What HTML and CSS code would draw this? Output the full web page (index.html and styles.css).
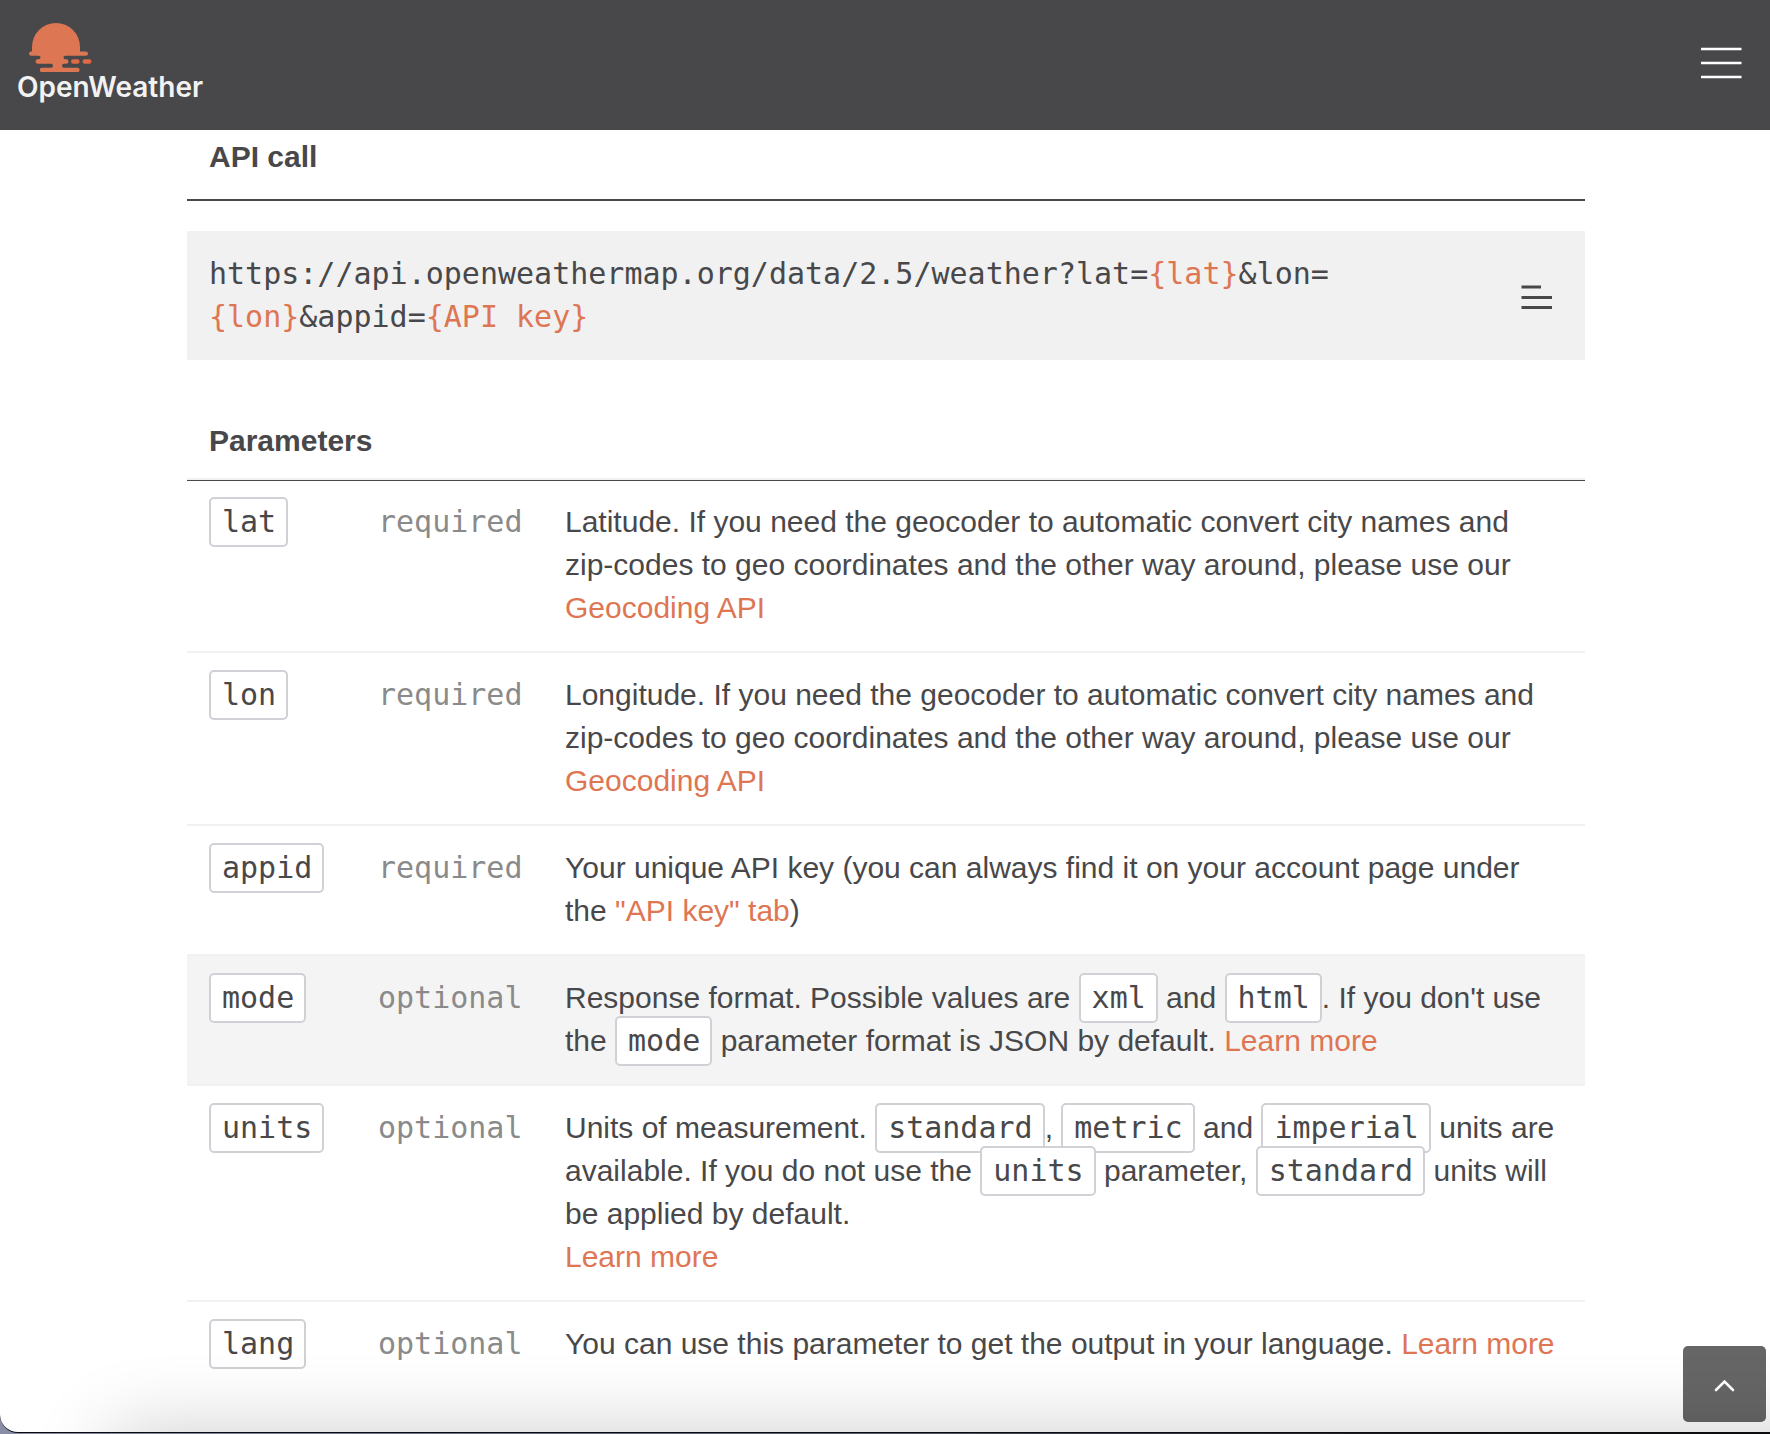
FILE: index.html
```html
<!DOCTYPE html>
<html lang="en">
<head>
<meta charset="utf-8">
<meta name="viewport" content="width=device-width, initial-scale=1">
<title>Current weather data - OpenWeather</title>
<link rel="stylesheet" href="styles.css">
</head>
<body>
<div class="page">
  <header class="topbar">
    <a class="logo" href="#">
      <svg class="logo-mark" width="64" height="51" viewBox="28 22 64 51" aria-hidden="true">
        <path class="sun" d="M32 51.400V47a24 24 0 0 1 48 0V51.400H85.800a2.200 2.200 0 0 1 0 4.400H65.200a1.700 1.700 0 0 0 0 3.400H66.300a2.200 2.200 0 0 1 0 4.500H64a2 2 0 0 0 0 4H77.400a2.200 2.200 0 0 1 0 4.400H42a2.200 2.200 0 0 1 0-4.400H51a2 2 0 0 0 0-4H37.800a2.200 2.200 0 0 1 0-4.500H38.800a1.700 1.700 0 0 0 0-3.400H31.200a2.200 2.200 0 0 1 0-4.400Z"/>
        <rect class="ray" x="71" y="59.200" width="8.600" height="4.500" rx="2.200"/>
        <rect class="ray" x="82.600" y="59.200" width="8.800" height="4.500" rx="2.200"/>
      </svg>
      <span class="logo-name">OpenWeather</span>
    </a>
    <button class="menu-button" type="button" aria-label="Menu">
      <svg width="42" height="32" viewBox="0 0 42 32" aria-hidden="true"><path d="M1 2h40.500M1 16h40.500M1 30h40.500"/></svg>
    </button>
  </header>

  <main class="content">
    <section>
      <h2 class="heading heading-call">API call</h2>
      <div class="call">
        <code class="call-url">https://api.openweathermap.org/data/2.5/weather?lat=<span class="accent">{lat}</span>&amp;lon=<wbr><span class="accent">{lon}</span>&amp;appid=<span class="accent">{API key}</span></code>
        <button class="call-menu" type="button" aria-label="More actions">
          <svg width="32" height="30" viewBox="0 0 32 30" aria-hidden="true"><path d="M0.500 7h19.500M0.500 17.500h30.500M0.500 27.500h30.500"/></svg>
        </button>
      </div>
    </section>

    <section>
      <h2 class="heading heading-params" id="params">Parameters</h2>
      <table class="params" aria-labelledby="params">
        <tbody>
          <tr>
            <td class="name"><code class="chip">lat</code></td>
            <td class="need">required</td>
            <td class="about">Latitude. If you need the geocoder to automatic convert city names and zip-codes to geo coordinates and the other way around, please use our <a href="#">Geocoding API</a></td>
          </tr>
          <tr>
            <td class="name"><code class="chip">lon</code></td>
            <td class="need">required</td>
            <td class="about">Longitude. If you need the geocoder to automatic convert city names and zip-codes to geo coordinates and the other way around, please use our <a href="#">Geocoding API</a></td>
          </tr>
          <tr>
            <td class="name"><code class="chip">appid</code></td>
            <td class="need">required</td>
            <td class="about">Your unique API key (you can always find it on your account page under the <a href="#">"API key" tab</a>)</td>
          </tr>
          <tr class="active">
            <td class="name"><code class="chip">mode</code></td>
            <td class="need">optional</td>
            <td class="about">Response format. Possible values are <code class="chip">xml</code> and <code class="chip">html</code>. If you don't use the <code class="chip">mode</code> parameter format is JSON by default. <a href="#">Learn more</a></td>
          </tr>
          <tr>
            <td class="name"><code class="chip">units</code></td>
            <td class="need">optional</td>
            <td class="about">Units of measurement. <code class="chip">standard</code>, <code class="chip">metric</code> and <code class="chip">imperial</code> units are available. If you do not use the <code class="chip">units</code> parameter, <code class="chip">standard</code> units will be applied by default.<br><a href="#">Learn more</a></td>
          </tr>
          <tr>
            <td class="name"><code class="chip">lang</code></td>
            <td class="need">optional</td>
            <td class="about">You can use this parameter to get the output in your language. <a href="#">Learn more</a></td>
          </tr>
        </tbody>
      </table>
    </section>
  </main>

  <button class="to-top" type="button" aria-label="Back to top">
    <svg width="22" height="14" viewBox="0 0 22 14" aria-hidden="true"><path d="M2 11 10.500 2.500l8.500 8.500"/></svg>
  </button>
  <div class="bottom-shade" aria-hidden="true"></div>
</div>
</body>
</html>
```
FILE: styles.css
```css
* {
  box-sizing: border-box;
}

html {
  background: linear-gradient(to right, #8a8da6, #55576a 50%, #222226 75%, #0c0c0e);
}

body {
  margin: 0;
  color: #48484a;
  font: 30px/43px "Liberation Sans", Arial, sans-serif;
}

.page {
  min-height: calc(100vh - 1px);
  border-bottom: 1px solid #0a0a10;
  border-bottom-left-radius: 18px;
  background: #fff;
  overflow: hidden;
}

a,
.accent {
  color: #de7654;
  text-decoration: none;
}

button {
  padding: 0;
  border: 0;
  background: none;
  cursor: pointer;
}

svg {
  display: block;
  fill: none;
}

.topbar {
  display: flex;
  align-items: flex-start;
  justify-content: space-between;
  height: 130px;
  padding: 22px 28px 0 17px;
  background: #48484a;
}

.logo {
  display: flex;
  flex-direction: column;
}

.logo-mark {
  margin-left: 11px;
}

.sun {
  fill: #dd7653;
}

.ray {
  fill: #e06a45;
}

.logo-name {
  color: #f2f2f2;
  font: 600 28px/28px Inter, sans-serif;
}

.menu-button {
  margin-top: 25px;
  stroke: #fff;
  stroke-width: 2.600;
}

.content {
  padding: 5px 185px 0 187px;
}

.heading {
  margin: 0;
  padding: 0 22px;
  font-size: 30px;
  font-weight: 700;
}

.heading-call {
  padding-bottom: 21px;
  border-bottom: 2px solid #48484a;
}

.heading-params {
  margin: 59px 0 -1px;
  padding-bottom: 18px;
  border-bottom: 1px solid #48484a;
  box-shadow: inset 0 -2px #f1f1f1;
}

.call {
  display: flex;
  align-items: center;
  gap: 100px;
  margin-top: 30px;
  padding: 21px 32px 22px 22px;
  background: #f1f1f1;
}

.call-url {
  flex: 1;
}

.call-menu {
  stroke: #48484a;
  stroke-width: 3;
}

code,
.need {
  font-family: "DejaVu Sans Mono", monospace;
  font-size: 30px;
}

.params {
  width: 100%;
  border-collapse: separate;
  border-spacing: 0;
  table-layout: fixed;
}

.params td {
  padding: 20px 21px 22px;
  vertical-align: top;
}

.params tr + tr td {
  border-top: 2px solid #f1f1f1;
}

.params .name {
  width: 170px;
  padding-left: 22px;
  padding-right: 0;
}

.need {
  width: 187px;
  color: #8a8a8a;
}

.active {
  background: #f4f4f4;
}

.chip {
  padding: 5px 10px 6px 11px;
  border: 2px solid #d0d0d6;
  border-radius: 5px;
  background: #fff;
}

.to-top {
  position: fixed;
  right: 4px;
  bottom: 12px;
  display: grid;
  place-items: center;
  width: 83px;
  height: 76px;
  border-radius: 5px;
  background: #666;
  stroke: #fff;
  stroke-width: 2.600;
  stroke-linecap: round;
}

.to-top svg {
  margin-top: 4px;
}

/* Soft shade rising from the lower edge of the window */
.bottom-shade {
  position: fixed;
  top: calc(100vh - 2px);
  left: 110px;
  right: -200px;
  height: 200px;
  box-shadow: 0 0 80px rgba(0, 0, 0, 0.2);
  pointer-events: none;
}
```
